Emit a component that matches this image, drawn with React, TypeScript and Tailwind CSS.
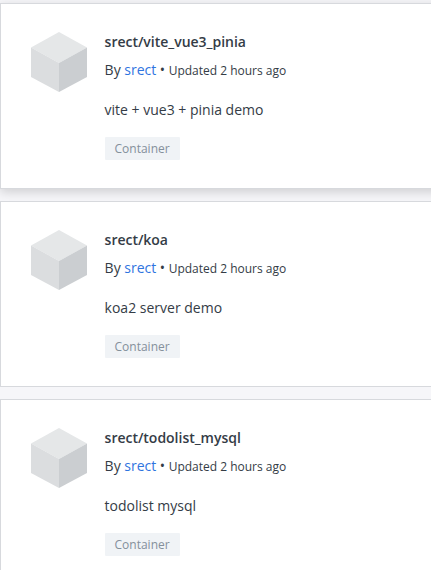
const repos = [
  { name: 'srect/vite_vue3_pinia', description: 'vite + vue3 + pinia demo', raised: true },
  { name: 'srect/koa', description: 'koa2 server demo', raised: false },
  { name: 'srect/todolist_mysql', description: 'todolist mysql', raised: false },
];

function Cube() {
  return (
    <svg className="h-[60px] w-[56px] shrink-0" viewBox="0 0 56 60" aria-hidden="true">
      <path d="M28 0 56 15.5 28 31 0 15.5Z" fill="#e5e7e8" />
      <path d="M0 15.5 28 31V60L0 45Z" fill="#dbdddf" />
      <path d="M56 15.5 28 31V60L56 45Z" fill="#cbced1" />
    </svg>
  );
}

export default function App() {
  return (
    <main className="flex h-[570px] w-[431px] flex-col gap-3 overflow-hidden bg-[#f6f6f9] pt-[3px] font-['Open_Sans',sans-serif] text-[#343c46]">
      {repos.map((repo) => (
        <article
          key={repo.name}
          className={`flex h-[186px] w-[460px] shrink-0 gap-[17.6px] border border-[#d7d9dd] bg-white pl-[30px] pt-7 ${repo.raised ? 'shadow-[0_3px_10px_rgba(0,0,0,0.16)]' : ''}`}
        >
          <Cube />
          <div className="flex flex-col items-start">
            <h2 className="text-sm leading-5 font-semibold tracking-[-0.02px]">{repo.name}</h2>
            <p className="mt-2 text-sm leading-5 tracking-[-0.01px]">
              By <a className="text-[#2f74df]">srect</a> • <span className="text-xs">Updated 2 hours ago</span>
            </p>
            <p className="mt-5 text-sm leading-5">{repo.description}</p>
            <span className="mt-[17px] flex h-[23px] w-[75px] items-center justify-center rounded-[1px] bg-[#f0f3f6] text-xs text-[#84909b]">Container</span>
          </div>
        </article>
      ))}
    </main>
  );
}
